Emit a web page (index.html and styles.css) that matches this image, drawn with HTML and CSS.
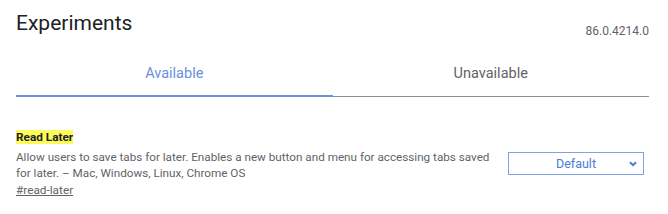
FILE: index.html
```html
<html>
    <head>
        <link rel="stylesheet" href="styles.css">
    </head>
    <body>
        <div class="page">
            <div class="header">
                <h1 class="title">Experiments</h1>
                <span class="version">86.0.4214.0</span>
            </div>
            <div class="tabs">
                <div class="tab selected">Available</div>
                <div class="tab">Unavailable</div>
            </div>
            <div class="experiment">
                <div class="experiment-text">
                    <h3 class="experiment-name"><span class="match">Read Later</span></h3>
                    <p class="description">Allow users to save tabs for later. Enables a new button and menu for accessing tabs saved for later. &ndash; Mac, Windows, Linux, Chrome OS</p>
                    <a class="permalink" href="#read-later">#read-later</a>
                </div>
                <div class="experiment-actions">
                    <div class="experiment-select">
                        <span>Default</span>
                        <svg class="chevron" width="8" height="6" viewBox="0 0 8 6"><path d="M1 1.2 L4 4.2 L7 1.2" fill="none" stroke="#4c7bd3" stroke-width="2"/></svg>
                    </div>
                </div>
            </div>
        </div>
    </body>
</html>
```

FILE: styles.css
```css
body {margin: 0; background-color: #fff; font-family: Roboto, "Liberation Sans", Arial, sans-serif; color: #202124;}
.page {padding: 9px 19px 0 16px;}

.header {display: flex; justify-content: space-between; align-items: flex-start; height: 41px;}
.title {margin: 0; font-size: 21px; font-weight: 400; line-height: 28px; color: #202124;}
.version {margin-top: 14px; font-size: 12px; line-height: 16px; color: #5f6368;}

.tabs {display: flex; border-bottom: 1px solid #8e9094;}
.tab {flex: 1; text-align: center; font-size: 14.5px; line-height: 20px; padding: 14px 0 12px; color: #5f6368;}
.tab.selected {color: #6790dc; border-bottom: 2px solid #6b93dc; margin-bottom: -1px; padding-bottom: 11px;}

.experiment {display: flex; align-items: center; margin-top: 32px;}
.experiment-text {width: 486px;}
.experiment-name {margin: 0; font-size: 11.8px; font-weight: 700; line-height: 16px;}
.match {background-color: #fbfb5a;}
.description {margin: 4px 0 0; font-size: 11.7px; line-height: 16px; color: #5f6368;}
.permalink {display: inline-block; margin-top: 1px; font-size: 11.8px; line-height: 16px; color: #5f6368; text-decoration: underline;}

.experiment-actions {flex: 1; display: flex; justify-content: flex-end; padding-right: 5px;}
.experiment-select {
    width: 134px;
    height: 21px;
    border: 1px solid #7fa2e0;
    display: flex;
    align-items: center;
    justify-content: center;
    position: relative;
    font-size: 12.5px;
    color: #4c7bd3;
}
.chevron {position: absolute; right: 6px; top: 8px;}
```
